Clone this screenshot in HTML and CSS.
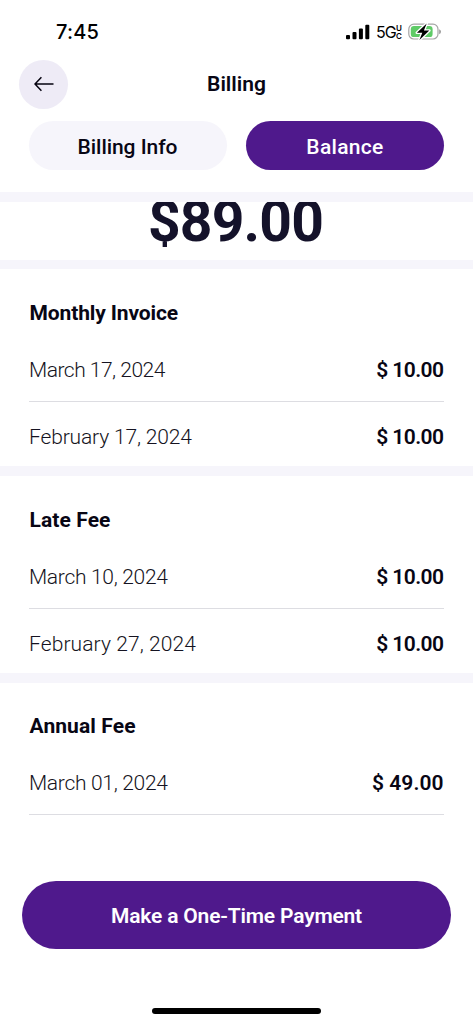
FILE: index.html
```html
<!DOCTYPE html>
<html lang="en">
<head>
<meta charset="utf-8">
<title>Billing</title>
<link rel="stylesheet" href="styles.css">
</head>
<body>
<main class="screen">
  <div class="status">
    <span class="clock">7:45</span>
    <div class="indicators">
      <svg class="signal" width="24" height="16" viewBox="0 0 24 16">
        <rect x="0" y="10.9" width="4" height="4.4" rx="1"/>
        <rect x="6.5" y="8" width="4" height="7.3" rx="1"/>
        <rect x="12.9" y="4.4" width="4" height="10.9" rx="1"/>
        <rect x="19.3" y="0.8" width="4" height="14.5" rx="1"/>
      </svg>
      <span class="network">5G</span>
      <span class="uc"><span>U</span><span>C</span></span>
      <svg class="battery" width="34" height="20" viewBox="0 0 34 20">
        <rect x="0.8" y="2.2" width="29.2" height="14.8" rx="5" fill="none" stroke="#a5a5a5" stroke-width="1.2"/>
        <path d="M31.4 7.2c1.8.9 1.8 4.1 0 5z" fill="#777"/>
        <rect x="2.8" y="4.1" width="21.8" height="11" rx="3.2" fill="#5fcb67"/>
        <path d="M18.7 1.4L8.9 10.8h5.4L11.4 18L21.3 8.5h-5.4z" fill="#000" stroke="#fff" stroke-width="2.6" paint-order="stroke" stroke-linejoin="round"/>
      </svg>
    </div>
  </div>
  <header class="header">
    <button class="back" aria-label="Back">
      <svg width="20" height="16" viewBox="0 0 20 16"><path d="M19.5 8H1.2M7.4 1.2L1 8l6.4 6.8" fill="none" stroke="#05030f" stroke-width="1.5"/></svg>
    </button>
    <h1 class="title">Billing</h1>
  </header>
  <nav class="tabs">
    <button class="tab tab-info">Billing Info</button>
    <button class="tab tab-active">Balance</button>
  </nav>
  <div class="band"></div>
  <div class="total"><span class="amount-due">$89.00</span></div>
  <div class="band band-slim"></div>
  <section class="group">
    <h2 class="heading monthly">Monthly Invoice</h2>
    <div class="row"><span class="date tightest">March 17, 2024</span><span class="amount">$ 10.00</span></div>
    <div class="row"><span class="date snug">February 17, 2024</span><span class="amount">$ 10.00</span></div>
  </section>
  <div class="band"></div>
  <section class="group">
    <h2 class="heading">Late Fee</h2>
    <div class="row"><span class="date tight">March 10, 2024</span><span class="amount">$ 10.00</span></div>
    <div class="row"><span class="date loose">February 27, 2024</span><span class="amount">$ 10.00</span></div>
  </section>
  <div class="band"></div>
  <section class="group group-annual">
    <h2 class="heading">Annual Fee</h2>
    <div class="row"><span class="date tight">March 01, 2024</span><span class="amount wide">$ 49.00</span></div>
  </section>
  <button class="pay">Make a One-Time Payment</button>
  <div class="home"></div>
</main>
</body>
</html>
```
FILE: styles.css
```css
* { box-sizing: border-box; margin: 0; padding: 0; }
body { background: #fff; color: #080614; font-family: Roboto, "Liberation Sans", sans-serif; }
button { border: 0; font-family: inherit; color: inherit; }
svg { display: block; flex: none; }
.screen { width: 473px; height: 1024px; display: flex; flex-direction: column; overflow: hidden; }
.screen > * { flex: none; }
.status { height: 59px; padding: 20px 31px 0 56px; display: flex; justify-content: space-between; align-items: flex-start; }
.clock { font: 500 20px/24px Inter, sans-serif; letter-spacing: 0.2px; color: #000; }
.indicators { display: flex; align-items: center; height: 23px; color: #000; }
.network { margin-left: 6px; font: 400 16px/20px Inter, sans-serif; letter-spacing: -0.8px; }
.uc { width: 7px; display: flex; flex-direction: column; font: 600 8px/8px Inter, sans-serif; }
.battery { margin-left: 5px; }
.header { height: 50px; padding: 0 19px 0 19px; display: grid; grid-template-columns: 48px 1fr 48px; align-items: center; }
.back { width: 49px; height: 49px; border-radius: 50%; background: #eeebf6; display: flex; align-items: center; justify-content: center; }
.title { font-size: 21px; font-weight: 600; line-height: 28px; text-align: center; letter-spacing: 0; }
.tabs { padding: 12px 29px 0; height: 83px; display: flex; justify-content: space-between; }
.tab { width: 198px; height: 49px; padding-top: 2px; border-radius: 25px; font-size: 21px; font-weight: 500; line-height: 49px; }
.tab-info { background: #f6f5fb; padding-right: 1px; letter-spacing: -0.05px; }
.tab-active { background: #4f198c; color: #fff; letter-spacing: 0.3px; }
.band { height: 10px; background: #f6f5fb; }
.band-slim { height: 9px; }
.total { height: 58px; overflow: hidden; display: flex; align-items: center; justify-content: center; }
.amount-due { margin: -19px 2px 0 0; font-size: 57px; font-weight: 700; line-height: 70px; letter-spacing: -0.8px; color: #14122a; }
.group { padding: 30px 29px 0; height: 197px; }
.group-annual { height: 198px; padding-top: 29px; }
.heading { font-size: 21px; font-weight: 700; line-height: 28px; margin-bottom: 8px; padding-left: 0.5px; letter-spacing: 0.1px; }
.monthly { letter-spacing: -0.12px; }
.row { display: flex; justify-content: space-between; padding: 21px 0 17px; border-bottom: 1px solid #dddde2; font-size: 21px; line-height: 28px; }
.row + .row { padding-bottom: 15px; border-bottom: 0; }
.date { font-weight: 300; color: #151321; }
.tightest { letter-spacing: -0.5px; }
.tight { letter-spacing: -0.3px; }
.snug { letter-spacing: -0.15px; }
.loose { letter-spacing: 0.1px; }
.amount { font-weight: 600; letter-spacing: -0.55px; padding-right: 0.5px; }
.wide { letter-spacing: 0.05px; }
.pay { width: 429px; height: 68px; margin-left: 22px; border-radius: 34px; background: #4f198c; color: #fff; font-size: 21px; font-weight: 600; line-height: 70px; letter-spacing: -0.18px; }
.home { width: 169px; height: 6px; margin: 59px 0 0 152px; border-radius: 3px; background: #000; }
```
